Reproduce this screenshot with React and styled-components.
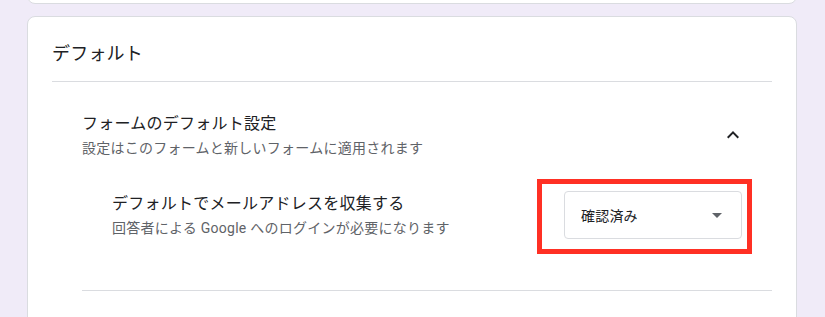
import styled, { createGlobalStyle } from 'styled-components';

const GlobalStyle = createGlobalStyle`
  body {
    margin: 0;
    background: #f0ebf8;
    font-family: Roboto, "Noto Sans CJK JP", sans-serif;
    color: #202124;
  }
`;

export default function App() {
  return (
    <>
      <GlobalStyle />
      <Page>
        <PrevCard />
        <Card>
          <CardTitle>デフォルト</CardTitle>
          <Section>
            <SectionHeader>
              <HeaderText>
                <Title>フォームのデフォルト設定</Title>
                <Subtitle>設定はこのフォームと新しいフォームに適用されます</Subtitle>
              </HeaderText>
              <Chevron viewBox="0 0 24 24">
                <path d="M12 8l-6 6 1.41 1.41L12 10.83l4.59 4.58L18 14z" />
              </Chevron>
            </SectionHeader>
            <SettingRow>
              <HeaderText>
                <Title>デフォルトでメールアドレスを収集する</Title>
                <Subtitle>回答者による Google へのログインが必要になります</Subtitle>
              </HeaderText>
              <SelectWrap>
                <Select>
                  <span>確認済み</span>
                  <Caret viewBox="0 0 24 24">
                    <path d="M7 10l5 5 5-5z" />
                  </Caret>
                </Select>
                <Highlight />
              </SelectWrap>
            </SettingRow>
          </Section>
        </Card>
      </Page>
    </>
  );
}

const Page = styled.div`
  display: flex;
  flex-direction: column;
  gap: 12px;
  padding: 0 28px 0 27px;
  height: 317px;
  overflow: hidden;
`;

const PrevCard = styled.div`
  flex: none;
  margin-top: -40px;
  height: 42px;
  background: #fff;
  border: 1px solid #dadce0;
  border-radius: 8px;
`;

const Card = styled.div`
  flex: none;
  background: #fff;
  border: 1px solid #dadce0;
  border-radius: 8px;
  padding: 0 24px 60px;
`;

const CardTitle = styled.div`
  font-size: 18px;
  line-height: 24px;
  letter-spacing: 0.2px;
  padding: 25px 0 15px;
  border-bottom: 1px solid #dadce0;
`;

const Section = styled.div`
  margin-left: 30px;
  padding-top: 30px;
  padding-bottom: 51px;
  border-bottom: 1px solid #dadce0;
`;

const SectionHeader = styled.div`
  display: flex;
  align-items: center;
  justify-content: space-between;
  padding-right: 27px;
  margin-bottom: 33px;
`;

const HeaderText = styled.div`
  display: flex;
  flex-direction: column;
  gap: 2px;
`;

const Title = styled.div`
  font-size: 16px;
  line-height: 24px;
  letter-spacing: 0.25px;
  color: #202124;
`;

const Subtitle = styled.div`
  font-size: 14px;
  line-height: 20px;
  letter-spacing: 0.25px;
  color: #5f6368;
`;

const Chevron = styled.svg`
  width: 24px;
  height: 24px;
  fill: #202124;
`;

const SettingRow = styled.div`
  display: flex;
  align-items: center;
  justify-content: space-between;
  padding: 0 30px;
`;

const SelectWrap = styled.div`
  position: relative;
`;

const Select = styled.div`
  box-sizing: border-box;
  width: 178px;
  height: 48px;
  display: flex;
  align-items: center;
  justify-content: space-between;
  padding: 0 12px 0 16px;
  border: 1px solid #dadce0;
  border-radius: 4px;
  font-size: 14px;
  letter-spacing: 0.2px;
  color: #202124;
`;

const Caret = styled.svg`
  width: 24px;
  height: 24px;
  fill: #5f6368;
`;

const Highlight = styled.div`
  position: absolute;
  top: -12px;
  left: -27px;
  right: -10px;
  bottom: -15px;
  border: 5px solid #ff3024;
  pointer-events: none;
`;
